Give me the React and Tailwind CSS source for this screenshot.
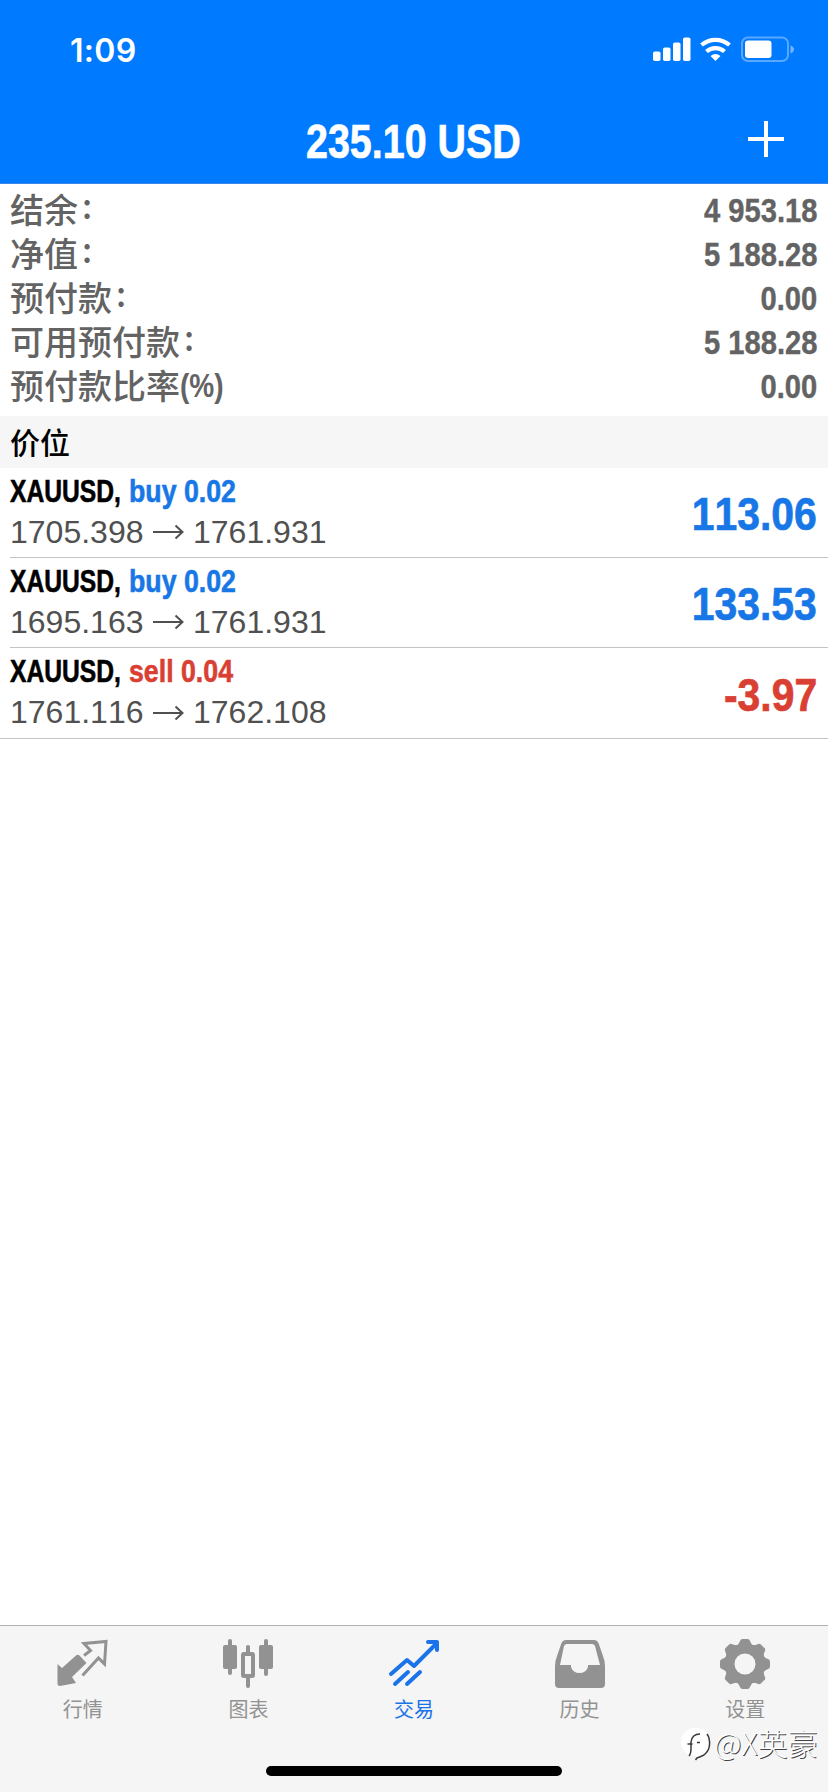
import React from 'react';

const account = [
  { label: '结余', suffix: ':', value: '4 953.18' },
  { label: '净值', suffix: ':', value: '5 188.28' },
  { label: '预付款', suffix: ':', value: '0.00' },
  { label: '可用预付款', suffix: ':', value: '5 188.28' },
  { label: '预付款比率', suffix: '(%)', value: '0.00' },
];

const positions = [
  { symbol: 'XAUUSD,', side: 'buy', volume: '0.02', open: '1705.398', current: '1761.931', profit: '113.06' },
  { symbol: 'XAUUSD,', side: 'buy', volume: '0.02', open: '1695.163', current: '1761.931', profit: '133.53' },
  { symbol: 'XAUUSD,', side: 'sell', volume: '0.04', open: '1761.116', current: '1762.108', profit: '-3.97' },
];

const tabs = [
  { name: '行情', Icon: QuotesIcon },
  { name: '图表', Icon: ChartIcon },
  { name: '交易', Icon: TradeIcon, active: true },
  { name: '历史', Icon: HistoryIcon },
  { name: '设置', Icon: SettingsIcon },
];

function QuotesIcon() {
  return (
    <svg width="52" height="52" viewBox="0 0 52 52" fill="none">
      <path d="M0.500 26 L5 30 L19 17.500 Q21 16 23 18 L29.500 25 L15 39 L19 45 L3 48 Q0.500 48 0.500 46 Z" fill="#929292" />
      <path d="M27 17.500 L33.500 12.500 L27 5.500 L49 3.500 L47.500 26 L41.500 20 L25.500 37.500" stroke="#929292" strokeWidth="3" />
    </svg>
  );
}

function ChartIcon() {
  return (
    <svg width="52" height="52" viewBox="0 0 52 52" fill="#929292">
      <rect x="6" y="1" width="4" height="36" rx="2" />
      <rect x="1" y="7" width="14" height="24" rx="2" />
      <rect x="24" y="7" width="4" height="43" rx="2" />
      <rect x="21" y="16" width="10" height="22" rx="1" fill="#f5f5f5" stroke="#929292" strokeWidth="4" />
      <rect x="42" y="1" width="4" height="37" rx="2" />
      <rect x="37" y="7" width="14" height="24" rx="2" />
    </svg>
  );
}

function TradeIcon() {
  return (
    <svg width="52" height="52" viewBox="0 0 52 52" fill="none" stroke="#1a73e8" strokeWidth="4" strokeLinecap="round" strokeLinejoin="round">
      <path d="M3 36 L19 22 L26 28 L48 6" />
      <path d="M40 4 H49 V12" />
      <path d="M7 46 L20 34 M19 46 L32 34" />
    </svg>
  );
}

function HistoryIcon() {
  return (
    <svg width="52" height="52" viewBox="0 0 52 52">
      <path
        fillRule="evenodd"
        d="M12 2 H40 Q43 2 44.500 5 L49 18 Q51 23 51 28 V46 Q51 50 47 50 H5 Q1 50 1 46 V28 Q1 23 3 18 L7.500 5 Q9 2 12 2 Z M13 6 Q11 6 10 8 L6 27 H17 V29 A9 9 0 0 0 34 29 V27 H46 L41 8 Q40 6 38 6 Z"
        fill="#929292"
      />
    </svg>
  );
}

function SettingsIcon() {
  return (
    <svg width="52" height="52" viewBox="-26 -26 52 52">
      <g fill="#929292">
        <circle r="20.500" />
        <path id="tooth" d="M-8.500 -18 Q-6 -20 -5 -23 Q-4.500 -25 -2.500 -25 H2.500 Q4.500 -25 5 -23 Q6 -20 8.500 -18 Z" />
        {[45, 90, 135, 180, 225, 270, 315].map((a) => (
          <use key={a} href="#tooth" transform={`rotate(${a})`} />
        ))}
      </g>
      <circle r="10.500" fill="#f5f5f5" />
    </svg>
  );
}

function StatusIcons() {
  return (
    <svg width="144" height="28" viewBox="0 0 144 28" fill="white">
      <rect x="1" y="15.500" width="7.500" height="9.500" rx="1.800" />
      <rect x="11" y="11.500" width="7.500" height="13.500" rx="1.800" />
      <rect x="21" y="6.500" width="7.500" height="18.500" rx="1.800" />
      <rect x="31" y="1.500" width="7.500" height="23.500" rx="1.800" />
      <g fill="none" stroke="white" strokeWidth="4.200">
        <path d="M49.500 9 A21.500 21.500 0 0 1 77.500 9" />
        <path d="M54.500 15.500 A13.500 13.500 0 0 1 72.500 15.500" />
      </g>
      <path d="M63.500 25 L58.500 20 Q63.500 16 68.500 20 Z" />
      <rect x="90" y="1.500" width="46" height="23.500" rx="6" fill="none" stroke="white" strokeOpacity="0.350" strokeWidth="2" />
      <rect x="93" y="4.500" width="26.500" height="17.500" rx="3" />
      <path d="M138.500 9.500 Q142 11 142 13.500 Q142 16 138.500 17.500 Z" opacity="0.450" />
    </svg>
  );
}

function Position({ item, last }) {
  const color = item.side === 'buy' ? 'text-[#1877e6]' : 'text-[#d93f33]';
  return (
    <div className={last ? 'border-b border-[#c4c4c6]' : ''}>
      <div className={`ml-[10px] pr-[11px] h-[90px] flex justify-between items-center ${last ? '' : 'border-b border-[#c4c4c6]'}`}>
        <div className="flex flex-col pb-[2px]">
          <div className="flex h-[41px] items-center text-[32px] font-bold leading-[41px] whitespace-nowrap [-webkit-text-stroke:0.6px]">
            <span className="w-[119px] origin-left scale-x-[0.77] text-black">{item.symbol}</span>
            <span className={`w-[107px] origin-left scale-x-[0.835] ${color}`}>{item.side} {item.volume}</span>
          </div>
          <div className="flex h-[41px] items-center text-[32px] leading-[41px] text-[#505050]">
            <span className="w-[143px]">{item.open}</span>
            <svg width="31" height="16" viewBox="0 0 31 16" fill="none" stroke="#505050" strokeWidth="2">
              <path d="M0 8 H29 M22.500 1.500 L29.500 8 L22.500 14.500" />
            </svg>
            <span className="ml-[9px]">{item.current}</span>
          </div>
        </div>
        <span className={`origin-right scale-x-[0.87] text-[47px] leading-none font-bold pt-[2px] [-webkit-text-stroke:0.7px] ${color}`}>{item.profit}</span>
      </div>
    </div>
  );
}

export default function App() {
  return (
    <div className="w-[828px] h-[1792px] bg-white flex flex-col overflow-hidden font-['Liberation_Sans','Noto_Sans_CJK_SC',sans-serif] [font-kerning:none]">
      <header className="h-[184px] shrink-0 bg-[#007aff] text-white border-b border-[#3c86ea]">
        <div className="h-[98px] pl-[70px] pr-[32px] pt-[2px] flex items-center justify-between">
          <span className="font-['Inter',sans-serif] font-semibold text-[32px] tracking-[0.3px] pt-[1px]">1:09</span>
          <StatusIcons />
        </div>
        <div className="h-[86px] grid grid-cols-[1fr_auto_1fr] items-center">
          <span />
          <h1 className="scale-x-[0.83] text-[47.5px] leading-none font-bold -ml-[2px] pt-[2px] [-webkit-text-stroke:0.7px]">235.10 USD</h1>
          <svg className="justify-self-end mr-[43px] mb-[4px]" width="38" height="38" viewBox="0 0 38 38" stroke="white" strokeWidth="4">
            <path d="M1 19 H37 M19 1 V37" />
          </svg>
        </div>
      </header>

      <section className="h-[232px] shrink-0 pl-[10px] pr-[11px] pt-[4px] text-[#636363]">
        {account.map((row) => (
          <div key={row.label} className="h-[44px] flex items-center justify-between">
            <div className="flex items-center pb-[2px] font-['Noto_Sans_CJK_SC',sans-serif] font-medium text-[34px] leading-[44px]">
              <span>{row.label}</span>
              {row.suffix === ':' ? (
                <span className="ml-[4px] pb-[9px]">:</span>
              ) : (
                <span className="font-['Liberation_Sans',sans-serif] font-bold text-[33px] origin-left scale-x-[0.85] pt-[2px]">{row.suffix}</span>
              )}
            </div>
            <span className="origin-right scale-x-[0.87] text-[33.5px] leading-[44px] font-bold pt-[2px] [-webkit-text-stroke:0.4px]">{row.value}</span>
          </div>
        ))}
      </section>

      <div className="h-[52px] shrink-0 bg-[#f6f6f6] pl-[10px] pb-[2px] flex items-center text-black font-['Noto_Sans_CJK_SC',sans-serif] font-medium text-[30px]">
        价位
      </div>

      <main className="flex-1">
        {positions.map((item, i) => (
          <Position key={i} item={item} last={i === positions.length - 1} />
        ))}
      </main>

      <footer className="relative h-[167px] shrink-0 bg-[#f5f5f5] border-t border-[#b2b2b2] flex flex-col items-center">
        <nav className="w-full grid grid-cols-5 h-[140px] pt-[12px]">
          {tabs.map(({ name, Icon, active }) => (
            <div key={name} className={`flex flex-col items-center ${active ? 'text-[#1a73e8]' : 'text-[#929292]'}`}>
              <Icon />
              <span className="mt-[4px] font-['Noto_Sans_CJK_SC',sans-serif] text-[20px] leading-[29px]">{name}</span>
            </div>
          ))}
        </nav>
        <div className="w-[296px] h-[10px] rounded-full bg-black" />

        {/* watermark */}
        <div className="absolute left-[680px] top-[97px] flex items-center text-white">
          <svg width="32" height="38" viewBox="0 0 32 38">
            <path d="M15 5 A14 14 0 1 0 15 33 L18 37 Q31 32 30 18 Q29 5 15 5 Z" fill="white" />
            <path d="M7.500 21 H12.500 M17 19.500 H20 M9 33 Q11 31 11 25 V19 Q12 11 20 11 M27 11 Q30 15 29.500 22 Q29 28 24 32 Q20 34 17 35 L15.500 37" fill="none" stroke="#3a3a3a" strokeWidth="1.500" />
          </svg>
          <span className="ml-[2px] font-['Noto_Sans_CJK_SC',sans-serif] font-light text-[30px] leading-[36px] whitespace-nowrap [text-shadow:1px_1px_0_#444]">@X英豪</span>
        </div>
      </footer>
    </div>
  );
}
